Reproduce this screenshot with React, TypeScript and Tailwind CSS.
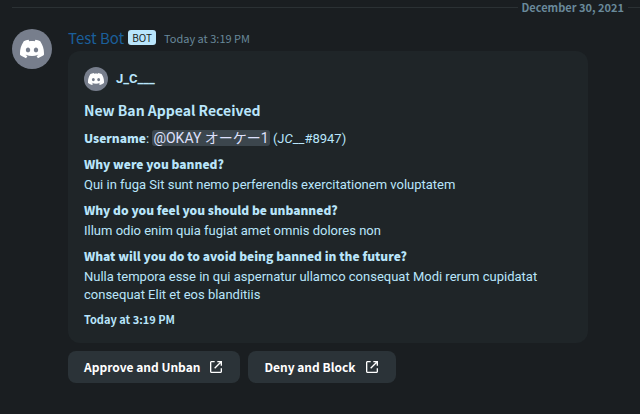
import type { ReactNode } from "react";
import { SiDiscord } from "react-icons/si";

function Field({ name, children }: { name: string; children: ReactNode }) {
  return (
    <div className="mt-[7px]">
      <h3 className="mb-[3px] font-['Noto_Sans_CJK_JP',sans-serif] text-[12px] leading-[18px] font-black">{name}</h3>
      <p className="text-[13px] leading-[18px]">{children}</p>
    </div>
  );
}

function LinkButton({ children }: { children: ReactNode }) {
  return (
    <button
      type="button"
      className="flex h-8 items-center gap-2 rounded-lg bg-[#2b3338] px-4 font-['Noto_Sans_CJK_JP',sans-serif] text-[12px] leading-4 font-bold text-white"
    >
      {children}
      <svg className="size-4" viewBox="0 0 24 24" fill="currentColor" aria-hidden="true">
        <path d="M10 5V3H5.375C4.06519 3 3 4.06519 3 5.375V18.625C3 19.936 4.06519 21 5.375 21H18.625C19.936 21 21 19.936 21 18.625V14H19V19H5V5H10Z" />
        <path d="M21 2.99902H14V4.99902H17.586L9.29297 13.292L10.707 14.706L19 6.41302V9.99902H21V2.99902Z" />
      </svg>
    </button>
  );
}

export default function App() {
  return (
    <main className="min-h-screen bg-[#1a1e21] font-['Roboto','Noto_Sans_CJK_JP',sans-serif] text-[#b9e5fb]">
      <div className="flex h-[14px] items-center gap-1 pl-3">
        <div className="h-px grow bg-[#2b3134]" />
        <time className="font-['Noto_Sans_CJK_JP',sans-serif] text-[11px] leading-[14px] font-bold text-[#69899a]">
          December 30, 2021
        </time>
        <div className="h-px w-3 bg-[#2b3134]" />
      </div>

      <article className="mt-[13px] flex gap-4 px-3">
        <div className="mt-0.5 flex size-10 shrink-0 items-center justify-center rounded-full bg-[#777e8c] text-white">
          <SiDiscord className="size-6" />
        </div>
        <div className="min-w-0 grow">
          <header className="flex h-[22px] items-center font-['Noto_Sans_CJK_JP',sans-serif]">
            <span className="text-[15px] leading-[22px] text-[#1a5f9a]">Test Bot</span>
            <span className="mb-0.5 ml-1 flex h-[15px] items-center rounded-[3px] bg-[#b9e5fb] px-1 text-[10px] text-[#1a1e21]">
              BOT
            </span>
            <time className="ml-2 text-[11px] leading-[22px] text-[#69899a]">Today at 3:19 PM</time>
          </header>

          <section className="mt-0.5 max-w-[520px] rounded-xl bg-[#1f2528] p-4">
            <div className="flex items-center gap-2">
              <div className="flex size-6 items-center justify-center rounded-full bg-[#777e8c] text-white">
                <SiDiscord className="size-4" />
              </div>
              <span className="text-[13px] font-bold">J_C___</span>
            </div>
            <h2 className="mt-2 font-['Noto_Sans_CJK_JP',sans-serif] text-[14px] leading-[22px] font-bold">
              New Ban Appeal Received
            </h2>
            <p className="mt-[9px] text-[13px] leading-[18px]">
              <strong className="font-['Noto_Sans_CJK_JP',sans-serif] text-[12px] leading-4 font-black">Username</strong>
              :{" "}
              <span className="rounded-[3px] bg-[#3c464d] px-px text-[14px] leading-4 text-[#dee0fc]">
                @OKAY オーケー1
              </span>{" "}
              (J
              <em>C</em>__#8947)
            </p>
            <Field name="Why were you banned?">
              Qui in fuga Sit sunt nemo perferendis exercitationem voluptatem
            </Field>
            <Field name="Why do you feel you should be unbanned?">
              Illum odio enim quia fugiat amet omnis dolores non
            </Field>
            <Field name="What will you do to avoid being banned in the future?">
              Nulla tempora esse in qui aspernatur ullamco consequat Modi rerum cupidatat consequat Elit et eos
              blanditiis
            </Field>
            <time className="mt-[7px] block font-['Noto_Sans_CJK_JP',sans-serif] text-[11px] leading-4 font-bold">
              Today at 3:19 PM
            </time>
          </section>

          <div className="mt-2 flex gap-2">
            <LinkButton>Approve and Unban</LinkButton>
            <LinkButton>Deny and Block</LinkButton>
          </div>
        </div>
      </article>
    </main>
  );
}
